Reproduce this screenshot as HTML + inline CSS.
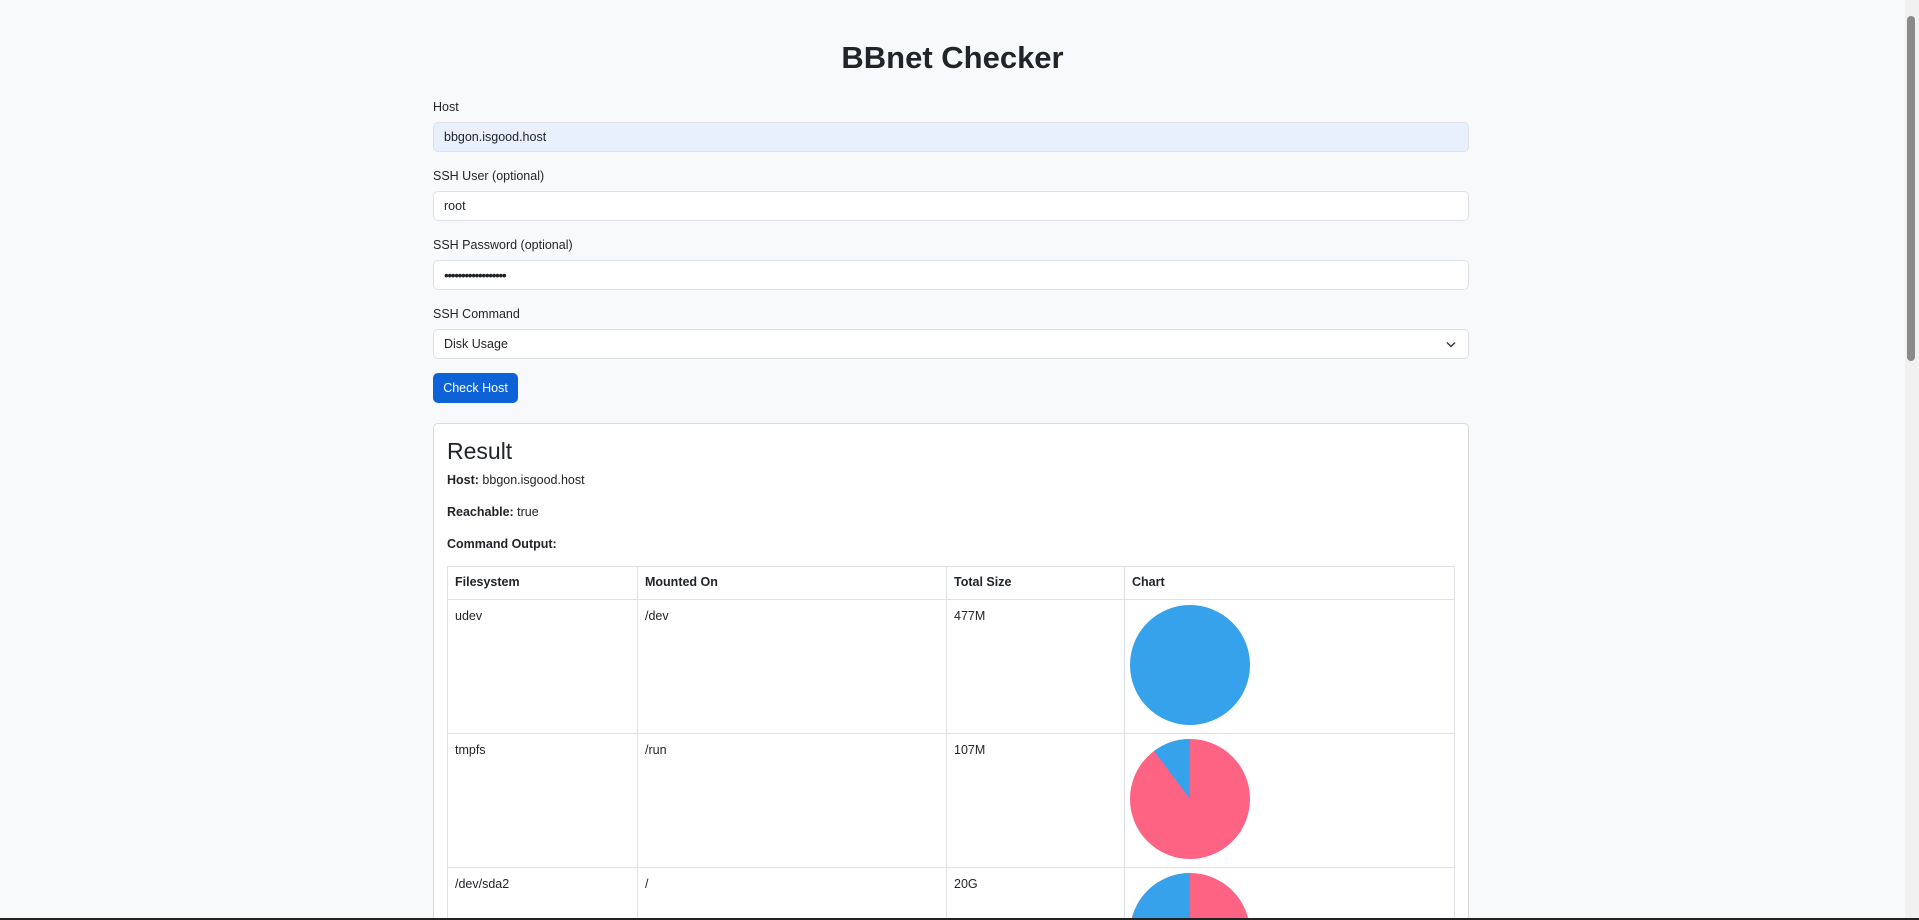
<!DOCTYPE html>
<html><head><meta charset="utf-8"><style>
*{box-sizing:border-box;margin:0;padding:0}
html,body{width:1919px;height:920px;overflow:hidden}
body{background:#f8f9fa;font-family:"Liberation Sans",sans-serif;color:#212529;font-size:12.5px;position:relative}
.abs{position:absolute}
h1{position:absolute;left:0;width:1905px;text-align:center;top:38px;font-size:31px;font-weight:bold;line-height:40px}
.lbl{position:absolute;left:433px;font-size:12.5px}
.inp{position:absolute;left:433px;width:1036px;height:30px;border:1px solid #dee2e6;border-radius:5px;background:#fff;padding-left:10px;line-height:28px;font-size:12.5px}
.btn{position:absolute;left:433px;top:373px;width:85px;height:30px;background:#0d62d8;color:#fff;border-radius:5px;text-align:center;line-height:30px;font-size:12.5px}
.card{position:absolute;left:433px;top:423px;width:1036px;height:497px;background:#fff;border:1px solid #d6d9dc;border-bottom:none;border-radius:5px 5px 0 0}
.tw{position:absolute;left:447px;top:566px;width:1008px;height:354px;overflow:hidden}
table{width:1008px;border-collapse:collapse;background:#fff}
td,th{border:1px solid #dee2e6;vertical-align:top;text-align:left;padding:9px 7px;font-size:12.5px}
th{height:33px;padding:8px 7px}
td{height:134px}
.sb{position:absolute;left:1905px;top:0;width:14px;height:920px;background:#f1f1f1}
.th{position:absolute;left:1907px;top:16px;width:8px;height:345px;background:#8a8a8a;border-radius:4px}
</style></head><body>
<h1>BBnet Checker</h1>
<div class="lbl" style="top:100px">Host</div>
<div class="inp" style="top:122px;background:#e8f0fe">bbgon.isgood.host</div>
<div class="lbl" style="top:169px">SSH User (optional)</div>
<div class="inp" style="top:191px">root</div>
<div class="lbl" style="top:238px">SSH Password (optional)</div>
<div class="inp" style="top:260px;font-size:14px;letter-spacing:-1.5px">••••••••••••••••••</div>
<div class="lbl" style="top:307px">SSH Command</div>
<div class="inp" style="top:329px">Disk Usage<svg class="abs" style="right:12px;top:11px" width="10" height="7" viewBox="0 0 10 7"><path d="M1 1.5L5 5.5L9 1.5" fill="none" stroke="#343a40" stroke-width="1.5"/></svg></div>
<div class="btn">Check Host</div>
<div class="card"></div>
<div class="abs" style="left:447px;top:437px;font-size:23px;line-height:28px">Result</div>
<div class="abs" style="left:447px;top:473px"><b>Host:</b> bbgon.isgood.host</div>
<div class="abs" style="left:447px;top:505px"><b>Reachable:</b> true</div>
<div class="abs" style="left:447px;top:537px"><b>Command Output:</b></div>
<div class="tw"><table>
<tr><th style="width:190px">Filesystem</th><th style="width:309px">Mounted On</th><th style="width:178px">Total Size</th><th>Chart</th></tr>
<tr><td>udev</td><td>/dev</td><td>477M</td><td style="padding:5px 5px"><svg width="120" height="120"><circle cx="60" cy="60" r="60" fill="#36a2eb"/></svg></td></tr>
<tr><td>tmpfs</td><td>/run</td><td>107M</td><td style="padding:5px 5px"><svg width="120" height="120"><circle cx="60" cy="60" r="60" fill="#ff6384"/><path d="M60 60L60 0A60 60 0 0 0 24 12Z" fill="#36a2eb"/></svg></td></tr>
<tr><td>/dev/sda2</td><td>/</td><td>20G</td><td style="padding:5px 5px"><svg width="120" height="120"><circle cx="60" cy="60" r="60" fill="#ff6384"/><path d="M60 60L60 0A60 60 0 0 0 60 120Z" fill="#36a2eb"/></svg></td></tr>
</table></div>
<div class="sb"></div><div class="th"></div>
<div class="abs" style="left:0;top:918px;width:1919px;height:2px;background:#222"></div>
</body></html>
